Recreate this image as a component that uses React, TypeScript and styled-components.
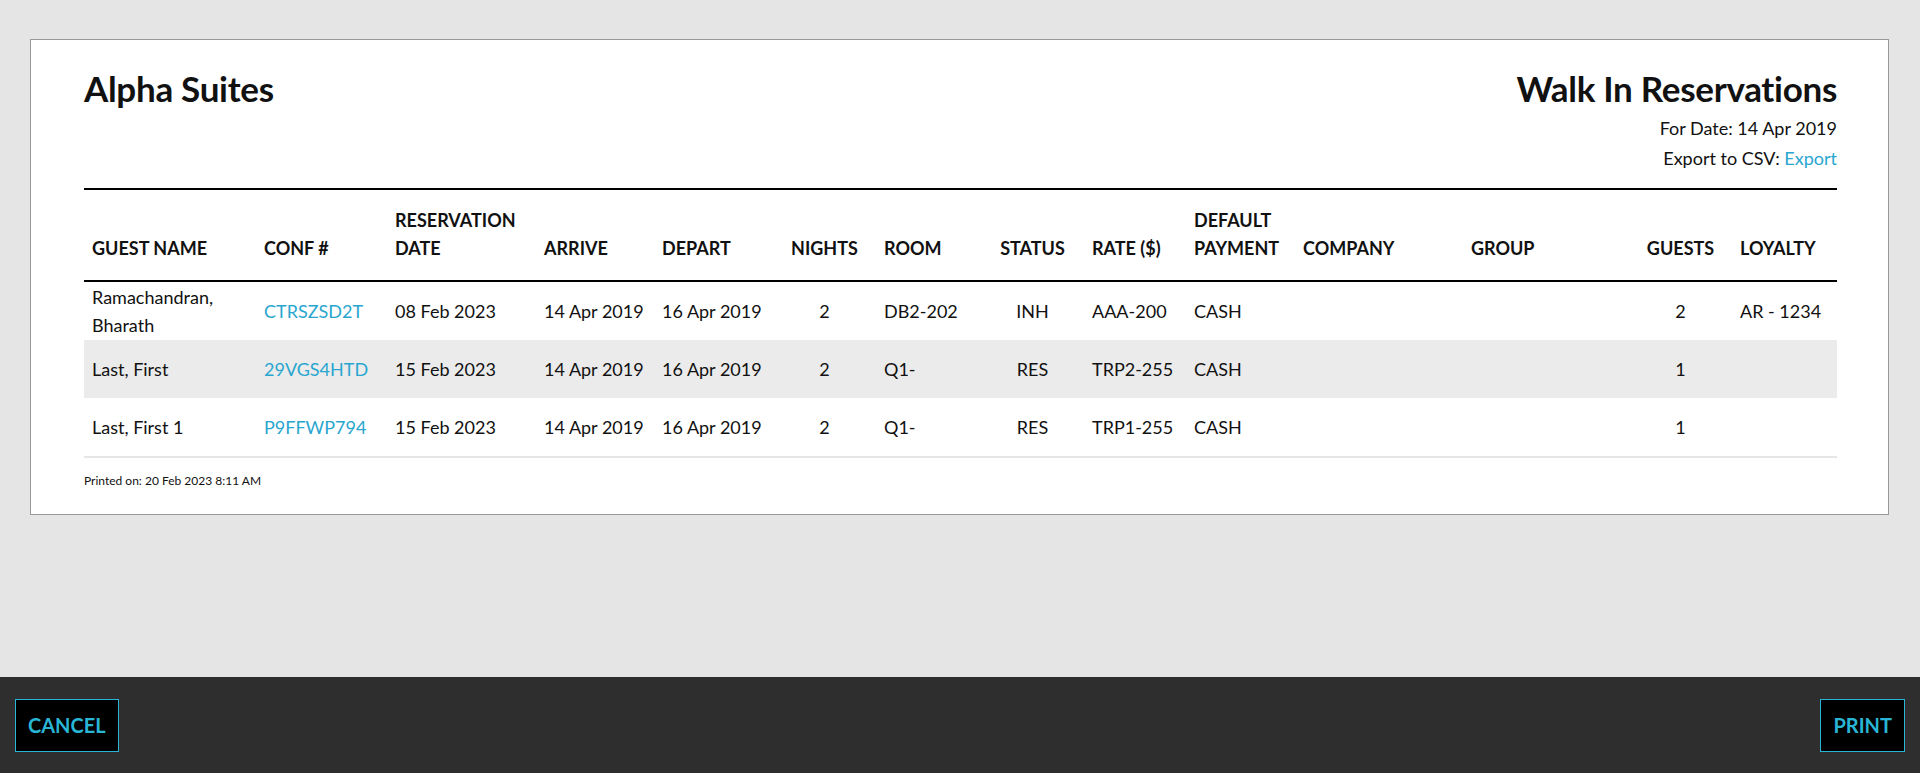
import React from "react";
import styled, { createGlobalStyle } from "styled-components";

const Global = createGlobalStyle`
  html, body { margin: 0; padding: 0; background: #e5e5e5; }
  body { font-family: Lato, "Open Sans", sans-serif; color: #111; }
`;

const Page = styled.div`
  display: flex; flex-direction: column; min-height: 100vh;
`;
const Main = styled.main`
  flex: 1; padding: 39px 31px 0 30px;
`;
const Card = styled.section`
  background: #fff; border: 1px solid #999; padding: 27px 51px 26px 53px;
`;
const Header = styled.header`
  display: flex; justify-content: space-between; align-items: flex-start;
  border-bottom: 2px solid #000; padding-bottom: 15px;
`;
const Title = styled.h1`
  margin: 0; font-size: 35px; line-height: 42px; font-weight: 700; letter-spacing: -0.3px;
`;
const RightBlock = styled.div`
  text-align: right; display: flex; flex-direction: column;
`;
const Meta = styled.div`
  font-size: 18px; line-height: 30px;
  &:first-of-type { margin-top: 4px; }
`;
const Link = styled.a`
  color: #29a6cf; text-decoration: none; cursor: pointer;
`;
const Table = styled.table`
  width: 100%; border-collapse: collapse; table-layout: fixed; font-size: 18px;
  border-bottom: 2px solid #e6e6e6;
`;
const Th = styled.th<{ $center?: boolean }>`
  text-align: ${p => (p.$center ? "center" : "left")};
  vertical-align: bottom; font-weight: 700; text-transform: uppercase;
  line-height: 28px; padding: 16px 8px 18px; border-bottom: 2px solid #000;
`;
const Tr = styled.tr<{ $alt?: boolean }>`
  background: ${p => (p.$alt ? "#ebebeb" : "#fff")};
`;
const Td = styled.td<{ $center?: boolean }>`
  text-align: ${p => (p.$center ? "center" : "left")};
  vertical-align: middle; line-height: 28px; padding: 1px 8px; height: 56px;
`;
const Printed = styled.div`
  font-size: 12px; margin-top: 15px;
`;
const Footer = styled.footer`
  height: 96px; background: #2e2e2e; display: flex; align-items: center;
  justify-content: space-between; padding: 0 15px;
`;
const Btn = styled.button`
  height: 53px; padding: 0 12px; background: #000; border: 1px solid #29b6d6;
  color: #29b6d6; font-family: Lato, sans-serif; font-weight: 700; font-size: 20px;
  text-transform: uppercase; cursor: pointer;
`;

const widths = [172, 131, 149, 118, 119, 103, 105, 103, 102, 109, 168, 166, 103, 105];
const heads: [React.ReactNode, boolean][] = [
  ["Guest Name", false], ["Conf #", false], [<>Reservation<br />Date</>, false], ["Arrive", false],
  ["Depart", false], ["Nights", true], ["Room", false], ["Status", true], ["Rate ($)", false],
  [<>Default<br />Payment</>, false], ["Company", false], ["Group", false], ["Guests", true], ["Loyalty", false],
];
const rows = [
  ["Ramachandran, Bharath", "CTRSZSD2T", "08 Feb 2023", "DB2-202", "INH", "AAA-200", "2", "AR - 1234"],
  ["Last, First", "29VGS4HTD", "15 Feb 2023", "Q1-", "RES", "TRP2-255", "1", ""],
  ["Last, First 1", "P9FFWP794", "15 Feb 2023", "Q1-", "RES", "TRP1-255", "1", ""],
];

export default function App() {
  return (
    <Page>
      <Global />
      <Main>
        <Card>
          <Header>
            <Title>Alpha Suites</Title>
            <RightBlock>
              <Title>Walk In Reservations</Title>
              <Meta>For Date: 14 Apr 2019</Meta>
              <Meta>Export to CSV: <Link>Export</Link></Meta>
            </RightBlock>
          </Header>
          <Table>
            <colgroup>
              {widths.map((w, i) => <col key={i} style={{ width: w }} />)}
            </colgroup>
            <thead>
              <tr>{heads.map(([h, c], i) => <Th key={i} $center={c}>{h}</Th>)}</tr>
            </thead>
            <tbody>
              {rows.map((r, i) => (
                <Tr key={i} $alt={i === 1}>
                  <Td>{r[0]}</Td>
                  <Td><Link>{r[1]}</Link></Td>
                  <Td>{r[2]}</Td>
                  <Td>14 Apr 2019</Td>
                  <Td>16 Apr 2019</Td>
                  <Td $center>2</Td>
                  <Td>{r[3]}</Td>
                  <Td $center>{r[4]}</Td>
                  <Td>{r[5]}</Td>
                  <Td>CASH</Td>
                  <Td></Td>
                  <Td></Td>
                  <Td $center>{r[6]}</Td>
                  <Td>{r[7]}</Td>
                </Tr>
              ))}
            </tbody>
          </Table>
          <Printed>Printed on: 20 Feb 2023 8:11 AM</Printed>
        </Card>
      </Main>
      <Footer>
        <Btn>Cancel</Btn>
        <Btn>Print</Btn>
      </Footer>
    </Page>
  );
}
